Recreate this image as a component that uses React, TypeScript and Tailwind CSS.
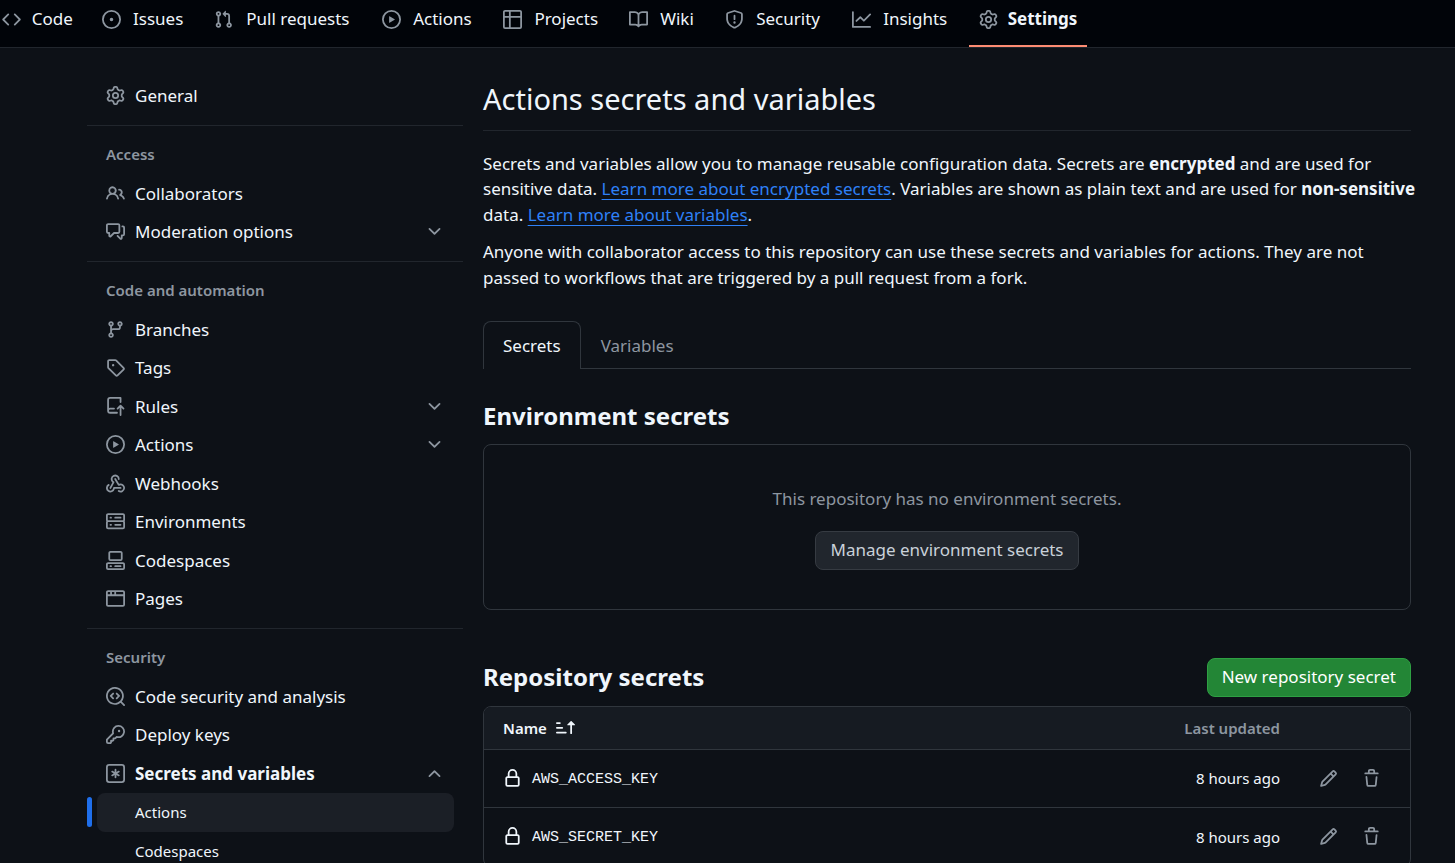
import React from "react";

const icons = {
  code: "m11.28 3.22 4.25 4.25a.75.75 0 0 1 0 1.06l-4.25 4.25a.749.749 0 0 1-1.275-.326.749.749 0 0 1 .215-.734L13.94 8l-3.72-3.72a.749.749 0 0 1 .326-1.275.749.749 0 0 1 .734.215Zm-6.56 0a.751.751 0 0 1 1.042.018.751.751 0 0 1 .018 1.042L2.06 8l3.72 3.72a.749.749 0 0 1-.326 1.275.749.749 0 0 1-.734-.215L.47 8.53a.75.75 0 0 1 0-1.06Z",
  issue: "M8 9.5a1.5 1.5 0 1 0 0-3 1.5 1.5 0 0 0 0 3Z M8 0a8 8 0 1 1 0 16A8 8 0 0 1 8 0ZM1.5 8a6.5 6.5 0 1 0 13 0 6.5 6.5 0 0 0-13 0Z",
  pull: "M1.5 3.25a2.25 2.25 0 1 1 3 2.122v5.256a2.251 2.251 0 1 1-1.5 0V5.372A2.25 2.25 0 0 1 1.5 3.25Zm5.677-.177L9.573.677A.25.25 0 0 1 10 .854V2.5h1A2.5 2.5 0 0 1 13.5 5v5.628a2.251 2.251 0 1 1-1.5 0V5a1 1 0 0 0-1-1h-1v1.646a.25.25 0 0 1-.427.177L7.177 3.427a.25.25 0 0 1 0-.354ZM3.75 2.5a.75.75 0 1 0 0 1.5.75.75 0 0 0 0-1.5Zm0 9.5a.75.75 0 1 0 0 1.5.75.75 0 0 0 0-1.5Zm8.25.75a.75.75 0 1 0 1.5 0 .75.75 0 0 0-1.5 0Z",
  play: "M8 0a8 8 0 1 1 0 16A8 8 0 0 1 8 0ZM1.5 8a6.5 6.5 0 1 0 13 0 6.5 6.5 0 0 0-13 0Zm4.879-2.773 4.264 2.559a.25.25 0 0 1 0 .428l-4.264 2.559A.25.25 0 0 1 6 10.559V5.442a.25.25 0 0 1 .379-.215Z",
  table: "M0 1.75C0 .784.784 0 1.75 0h12.5C15.216 0 16 .784 16 1.75v12.5A1.75 1.75 0 0 1 14.25 16H1.75A1.75 1.75 0 0 1 0 14.25ZM6.5 6.5v8h7.75a.25.25 0 0 0 .25-.25V6.5Zm8-1.5V1.75a.25.25 0 0 0-.25-.25H6.5V5Zm-13 1.5v7.75c0 .138.112.25.25.25H5v-8ZM5 5V1.5H1.75a.25.25 0 0 0-.25.25V5Z",
  book: "M0 1.75A.75.75 0 0 1 .75 1h4.253c1.227 0 2.317.59 3 1.501A3.743 3.743 0 0 1 11.006 1h4.245a.75.75 0 0 1 .75.75v10.5a.75.75 0 0 1-.75.75h-4.507a2.25 2.25 0 0 0-1.591.659l-.622.621a.75.75 0 0 1-1.06 0l-.622-.621A2.25 2.25 0 0 0 5.258 13H.75a.75.75 0 0 1-.75-.75Zm7.251 10.324.004-5.073-.002-2.253A2.25 2.25 0 0 0 5.003 2.5H1.5v9h3.757a3.75 3.75 0 0 1 1.994.574ZM8.755 4.75l-.004 7.322a3.752 3.752 0 0 1 1.992-.572H14.5v-9h-3.495a2.25 2.25 0 0 0-2.25 2.25Z",
  shield: "M7.467.133a1.748 1.748 0 0 1 1.066 0l5.25 1.68A1.75 1.75 0 0 1 15 3.48V7c0 1.566-.32 3.182-1.303 4.682-.983 1.498-2.585 2.813-5.032 3.855a1.697 1.697 0 0 1-1.33 0c-2.447-1.042-4.049-2.357-5.032-3.855C1.32 10.182 1 8.566 1 7V3.48a1.75 1.75 0 0 1 1.217-1.667Zm.61 1.429a.25.25 0 0 0-.153 0l-5.25 1.68a.25.25 0 0 0-.174.238V7c0 1.358.275 2.666 1.057 3.86.784 1.194 2.121 2.34 4.366 3.297a.196.196 0 0 0 .154 0c2.245-.956 3.582-2.104 4.366-3.298C13.225 9.666 13.5 8.36 13.5 7V3.48a.251.251 0 0 0-.174-.237l-5.25-1.68ZM8.75 4.75v3a.75.75 0 0 1-1.5 0v-3a.75.75 0 0 1 1.5 0ZM9 10.5a1 1 0 1 1-2 0 1 1 0 0 1 2 0Z",
  graph: "M1.5 1.75V13.5h13.75a.75.75 0 0 1 0 1.5H.75a.75.75 0 0 1-.75-.75V1.75a.75.75 0 0 1 1.5 0Zm14.28 2.53-5.25 5.25a.75.75 0 0 1-1.06 0L7 7.06 4.28 9.78a.751.751 0 0 1-1.042-.018.751.751 0 0 1-.018-1.042l3.25-3.25a.75.75 0 0 1 1.06 0L10 7.94l4.72-4.72a.751.751 0 0 1 1.042.018.751.751 0 0 1 .018 1.042Z",
  gear: "M8 0a8.2 8.2 0 0 1 .701.031C9.444.095 9.99.645 10.16 1.29l.288 1.107c.018.066.079.158.212.224.231.114.454.243.668.386.123.082.233.09.299.071l1.103-.303c.644-.176 1.392.021 1.82.63.27.385.506.792.704 1.218.315.675.111 1.422-.364 1.891l-.814.806c-.049.048-.098.147-.088.294.016.257.016.515 0 .772-.01.147.038.246.088.294l.814.806c.475.469.679 1.216.364 1.891a7.977 7.977 0 0 1-.704 1.217c-.428.61-1.176.807-1.82.63l-1.102-.302c-.067-.019-.177-.011-.3.071a5.909 5.909 0 0 1-.668.386c-.133.066-.194.158-.211.224l-.29 1.106c-.168.646-.715 1.196-1.458 1.26a8.006 8.006 0 0 1-1.402 0c-.743-.064-1.289-.614-1.458-1.26l-.289-1.106c-.018-.066-.079-.158-.212-.224a5.738 5.738 0 0 1-.668-.386c-.123-.082-.233-.09-.299-.071l-1.103.303c-.644.176-1.392-.021-1.82-.63a8.12 8.12 0 0 1-.704-1.218c-.315-.675-.111-1.422.363-1.891l.815-.806c.05-.048.098-.147.088-.294a6.214 6.214 0 0 1 0-.772c.01-.147-.038-.246-.088-.294l-.815-.806C.635 6.045.431 5.298.746 4.623a7.92 7.92 0 0 1 .704-1.217c.428-.61 1.176-.807 1.82-.63l1.102.302c.067.019.177.011.3-.071.214-.143.437-.272.668-.386.133-.066.194-.158.211-.224l.29-1.106C6.009.645 6.556.095 7.299.03 7.53.01 7.764 0 8 0Zm-.571 1.525c-.036.003-.108.036-.137.146l-.289 1.105c-.147.561-.549.967-.998 1.189-.173.086-.34.183-.5.29-.417.278-.97.423-1.529.27l-1.103-.303c-.109-.03-.175.016-.195.045-.22.312-.412.644-.573.99-.014.031-.021.11.059.19l.815.806c.411.406.562.957.53 1.456a4.709 4.709 0 0 0 0 .582c.032.499-.119 1.05-.53 1.456l-.815.806c-.081.08-.073.159-.059.19.162.346.353.677.573.989.02.03.085.076.195.046l1.102-.303c.56-.153 1.113-.008 1.53.27.161.107.328.204.501.29.447.222.85.629.997 1.189l.289 1.105c.029.109.101.143.137.146a6.6 6.6 0 0 0 1.142 0c.036-.003.108-.036.137-.146l.289-1.105c.147-.561.549-.967.998-1.189.173-.086.34-.183.5-.29.417-.278.97-.423 1.529-.27l1.103.303c.109.029.175-.016.195-.045.22-.313.411-.644.573-.99.014-.031.021-.11-.059-.19l-.815-.806c-.411-.406-.562-.957-.53-1.456a4.709 4.709 0 0 0 0-.582c-.032-.499.119-1.05.53-1.456l.815-.806c.081-.08.073-.159.059-.19a6.464 6.464 0 0 0-.573-.989c-.02-.03-.085-.076-.195-.046l-1.102.303c-.56.153-1.113.008-1.53-.27a4.44 4.44 0 0 0-.501-.29c-.447-.222-.85-.629-.997-1.189l-.289-1.105c-.029-.11-.101-.143-.137-.146a6.6 6.6 0 0 0-1.142 0ZM11 8a3 3 0 1 1-6 0 3 3 0 0 1 6 0ZM9.5 8a1.5 1.5 0 1 0-3.001.001A1.5 1.5 0 0 0 9.5 8Z",
  people: "M2 5.5a3.5 3.5 0 1 1 5.898 2.549 5.508 5.508 0 0 1 3.034 4.084.75.75 0 1 1-1.482.235 4 4 0 0 0-7.9 0 .75.75 0 0 1-1.482-.236A5.507 5.507 0 0 1 3.102 8.05 3.493 3.493 0 0 1 2 5.5ZM11 4a3.001 3.001 0 0 1 2.22 5.018 5.01 5.01 0 0 1 2.56 3.012.749.749 0 0 1-.885.954.752.752 0 0 1-.549-.514 3.507 3.507 0 0 0-2.522-2.372.75.75 0 0 1-.574-.73v-.352a.75.75 0 0 1 .416-.672A1.5 1.5 0 0 0 11 5.5.75.75 0 0 1 11 4Zm-5.5-.5a2 2 0 1 0-.001 3.999A2 2 0 0 0 5.5 3.5Z",
  discussion: "M1.75 1h8.5c.966 0 1.75.784 1.75 1.75v5.5A1.75 1.75 0 0 1 10.25 10H7.061l-2.574 2.573A1.458 1.458 0 0 1 2 11.543V10h-.25A1.75 1.75 0 0 1 0 8.25v-5.5C0 1.784.784 1 1.75 1ZM1.5 2.75v5.5c0 .138.112.25.25.25h1a.75.75 0 0 1 .75.75v2.19l2.72-2.72a.749.749 0 0 1 .53-.22h3.5a.25.25 0 0 0 .25-.25v-5.5a.25.25 0 0 0-.25-.25h-8.5a.25.25 0 0 0-.25.25Zm13 2a.25.25 0 0 0-.25-.25h-.5a.75.75 0 0 1 0-1.5h.5c.966 0 1.75.784 1.75 1.75v5.5A1.75 1.75 0 0 1 14.25 12H14v1.543a1.458 1.458 0 0 1-2.487 1.03L9.22 12.28a.749.749 0 0 1 .326-1.275.749.749 0 0 1 .734.215l2.22 2.22v-2.19a.75.75 0 0 1 .75-.75h1a.25.25 0 0 0 .25-.25Z",
  branch: "M9.5 3.25a2.25 2.25 0 1 1 3 2.122V6A2.5 2.5 0 0 1 10 8.5H6a1 1 0 0 0-1 1v1.128a2.251 2.251 0 1 1-1.5 0V5.372a2.25 2.25 0 1 1 1.5 0v1.836A2.493 2.493 0 0 1 6 7h4a1 1 0 0 0 1-1v-.628A2.25 2.25 0 0 1 9.5 3.25Zm-6 0a.75.75 0 1 0 1.5 0 .75.75 0 0 0-1.5 0Zm8.25-.75a.75.75 0 1 0 0 1.5.75.75 0 0 0 0-1.5ZM4.25 12a.75.75 0 1 0 0 1.5.75.75 0 0 0 0-1.5Z",
  tag: "M1 7.775V2.75C1 1.784 1.784 1 2.75 1h5.025c.464 0 .91.184 1.238.513l6.25 6.25a1.75 1.75 0 0 1 0 2.474l-5.026 5.026a1.75 1.75 0 0 1-2.474 0l-6.25-6.25A1.752 1.752 0 0 1 1 7.775Zm1.5 0c0 .066.026.13.073.177l6.25 6.25a.25.25 0 0 0 .354 0l5.025-5.025a.25.25 0 0 0 0-.354l-6.25-6.25a.25.25 0 0 0-.177-.073H2.75a.25.25 0 0 0-.25.25ZM6 5a1 1 0 1 1 0 2 1 1 0 0 1 0-2Z",
  rules: "M1 2.5A2.5 2.5 0 0 1 3.5 0h8.75a.75.75 0 0 1 .75.75v3.5a.75.75 0 0 1-1.5 0V1.5h-8a1 1 0 0 0-1 1v6.708A2.493 2.493 0 0 1 3.5 9h3.25a.75.75 0 0 1 0 1.5H3.5a1 1 0 0 0 0 2h5.75a.75.75 0 0 1 0 1.5H3.5A2.5 2.5 0 0 1 1 11.5Zm13.23 7.79h-.001l-1.224-1.224v6.184a.75.75 0 0 1-1.5 0V9.066L10.28 10.29a.75.75 0 0 1-1.06-1.061l2.505-2.504a.75.75 0 0 1 1.06 0L15.29 9.23a.751.751 0 0 1-.018 1.042.751.751 0 0 1-1.042.018Z",
  webhook: "M5.5 4.25a2.25 2.25 0 0 1 4.5 0 .75.75 0 0 0 1.5 0 3.75 3.75 0 1 0-6.14 2.889l-2.272 4.258a.75.75 0 0 0 1.324.706L7 7.25a.75.75 0 0 0-.309-1.015A2.25 2.25 0 0 1 5.5 4.25Z M7.364 3.607a.75.75 0 0 1 1.03.257l2.608 4.349a3.75 3.75 0 1 1-.628 6.785.75.75 0 0 1 .752-1.299 2.25 2.25 0 1 0-.033-3.88.75.75 0 0 1-1.03-.256L7.107 4.636a.75.75 0 0 1 .257-1.03Z M2.9 8.776A.75.75 0 0 1 2.625 9.8 2.25 2.25 0 1 0 6 11.75a.75.75 0 0 1 .75-.751h5.5a.75.75 0 0 1 0 1.5H7.425a3.751 3.751 0 1 1-5.55-3.998.75.75 0 0 1 1.024.274Z",
  server: "M1.75 1h12.5c.966 0 1.75.784 1.75 1.75v4c0 .372-.116.717-.314 1 .198.283.314.628.314 1v4a1.75 1.75 0 0 1-1.75 1.75H1.75A1.75 1.75 0 0 1 0 12.75v-4c0-.358.109-.707.314-1a1.739 1.739 0 0 1-.314-1v-4C0 1.784.784 1 1.75 1ZM1.5 2.75v4c0 .138.112.25.25.25h12.5a.25.25 0 0 0 .25-.25v-4a.25.25 0 0 0-.25-.25H1.75a.25.25 0 0 0-.25.25Zm.25 5.75a.25.25 0 0 0-.25.25v4c0 .138.112.25.25.25h12.5a.25.25 0 0 0 .25-.25v-4a.25.25 0 0 0-.25-.25ZM7 4.75A.75.75 0 0 1 7.75 4h4.5a.75.75 0 0 1 0 1.5h-4.5A.75.75 0 0 1 7 4.75ZM7.75 10h4.5a.75.75 0 0 1 0 1.5h-4.5a.75.75 0 0 1 0-1.5ZM3 4.75A.75.75 0 0 1 3.75 4h.5a.75.75 0 0 1 0 1.5h-.5A.75.75 0 0 1 3 4.75ZM3.75 10h.5a.75.75 0 0 1 0 1.5h-.5a.75.75 0 0 1 0-1.5Z",
  codespaces: "M0 11.25c0-.966.784-1.75 1.75-1.75h12.5c.966 0 1.75.784 1.75 1.75v3A1.75 1.75 0 0 1 14.25 16H1.75A1.75 1.75 0 0 1 0 14.25Zm2-9.5C2 .784 2.784 0 3.75 0h8.5C13.216 0 14 .784 14 1.75v5a1.75 1.75 0 0 1-1.75 1.75h-8.5A1.75 1.75 0 0 1 2 6.75Zm1.75-.25a.25.25 0 0 0-.25.25v5c0 .138.112.25.25.25h8.5a.25.25 0 0 0 .25-.25v-5a.25.25 0 0 0-.25-.25Zm-2 9.5a.25.25 0 0 0-.25.25v3c0 .138.112.25.25.25h12.5a.25.25 0 0 0 .25-.25v-3a.25.25 0 0 0-.25-.25Z M7 12.75a.75.75 0 0 1 .75-.75h4.5a.75.75 0 0 1 0 1.5h-4.5a.75.75 0 0 1-.75-.75Zm-4 0a.75.75 0 0 1 .75-.75h.5a.75.75 0 0 1 0 1.5h-.5a.75.75 0 0 1-.75-.75Z",
  browser: "M0 2.75C0 1.784.784 1 1.75 1h12.5c.966 0 1.75.784 1.75 1.75v10.5A1.75 1.75 0 0 1 14.25 15H1.75A1.75 1.75 0 0 1 0 13.25ZM14.5 6h-13v7.25c0 .138.112.25.25.25h12.5a.25.25 0 0 0 .25-.25Zm-6-3.5v2h6V2.75a.25.25 0 0 0-.25-.25ZM5 2.5v2h2v-2Zm-3.25 0a.25.25 0 0 0-.25.25V4.5h2v-2Z",
  codescan: "M8.47 4.97a.75.75 0 0 0 0 1.06L9.94 7.5 8.47 8.97a.75.75 0 1 0 1.06 1.06l2-2a.75.75 0 0 0 0-1.06l-2-2a.75.75 0 0 0-1.06 0ZM6.53 6.03a.75.75 0 0 0-1.06-1.06l-2 2a.75.75 0 0 0 0 1.06l2 2a.75.75 0 1 0 1.06-1.06L5.06 7.5l1.47-1.47Z M12.246 13.307a7.501 7.501 0 1 1 1.06-1.06l2.474 2.473a.749.749 0 0 1-.326 1.275.749.749 0 0 1-.734-.215ZM1.5 7.5a6.002 6.002 0 0 0 3.608 5.504 6.002 6.002 0 0 0 6.486-1.117.748.748 0 0 1 .292-.293A6 6 0 1 0 1.5 7.5Z",
  key: "M10.5 0a5.499 5.499 0 1 1-1.288 10.848l-.932.932a.749.749 0 0 1-.53.22H7v.75a.749.749 0 0 1-.22.53l-.5.5a.749.749 0 0 1-.53.22H5v.75a.749.749 0 0 1-.22.53l-.5.5a.749.749 0 0 1-.53.22h-2A1.75 1.75 0 0 1 0 14.25v-2c0-.199.079-.389.22-.53l4.932-4.932A5.5 5.5 0 0 1 10.5 0Zm-4 5.5c-.001.431.069.86.205 1.269a.75.75 0 0 1-.181.768L1.5 12.56v1.69c0 .138.112.25.25.25h1.69l.06-.06v-1.19a.75.75 0 0 1 .75-.75h1.19l.06-.06v-1.19a.75.75 0 0 1 .75-.75h1.19l1.023-1.025a.75.75 0 0 1 .768-.18A4 4 0 1 0 6.5 5.5ZM11 6a1 1 0 1 1 0-2 1 1 0 0 1 0 2Z",
  asterisk: "M0 2.75A2.75 2.75 0 0 1 2.75 0h10.5A2.75 2.75 0 0 1 16 2.75v10.5A2.75 2.75 0 0 1 13.25 16H2.75A2.75 2.75 0 0 1 0 13.25ZM2.75 1.5c-.69 0-1.25.56-1.25 1.25v10.5c0 .69.56 1.25 1.25 1.25h10.5c.69 0 1.25-.56 1.25-1.25V2.75c0-.69-.56-1.25-1.25-1.25Z M8 4a.75.75 0 0 1 .75.75V6.7l1.69-.975a.75.75 0 0 1 .75 1.3L9.5 8l1.69.976a.75.75 0 0 1-.75 1.298L8.75 9.3v1.951a.75.75 0 0 1-1.5 0V9.299l-1.69.976a.75.75 0 0 1-.75-1.3L6.5 8l-1.69-.975a.75.75 0 0 1 .75-1.3l1.69.976V4.75A.75.75 0 0 1 8 4Z",
  chevron: "M12.78 5.22a.749.749 0 0 1 0 1.06l-4.25 4.25a.749.749 0 0 1-1.06 0L3.22 6.28a.749.749 0 1 1 1.06-1.06L8 8.939l3.72-3.719a.749.749 0 0 1 1.06 0Z",
  pencil: "M11.013 1.427a1.75 1.75 0 0 1 2.474 0l1.086 1.086a1.75 1.75 0 0 1 0 2.474l-8.61 8.61c-.21.21-.47.364-.756.445l-3.251.93a.75.75 0 0 1-.927-.928l.929-3.25c.081-.286.235-.547.445-.758l8.61-8.61Zm.176 4.823L9.75 4.81l-6.286 6.287a.253.253 0 0 0-.064.108l-.558 1.953 1.953-.558a.253.253 0 0 0 .108-.064Zm1.238-3.763a.25.25 0 0 0-.354 0L10.811 3.75l1.439 1.44 1.263-1.263a.25.25 0 0 0 0-.354Z",
  trash: "M11 1.75V3h2.25a.75.75 0 0 1 0 1.5H2.75a.75.75 0 0 1 0-1.5H5V1.75C5 .784 5.784 0 6.75 0h2.5C10.216 0 11 .784 11 1.75ZM4.496 6.675l.66 6.6a.25.25 0 0 0 .249.225h5.19a.25.25 0 0 0 .249-.225l.66-6.6a.75.75 0 0 1 1.492.149l-.66 6.6A1.748 1.748 0 0 1 10.595 15h-5.19a1.75 1.75 0 0 1-1.741-1.575l-.66-6.6a.75.75 0 1 1 1.492-.15ZM6.5 1.75V3h3V1.75a.25.25 0 0 0-.25-.25h-2.5a.25.25 0 0 0-.25.25Z",
  lock: "M4 4a4 4 0 0 1 8 0v2h.25c.966 0 1.75.784 1.75 1.75v5.5A1.75 1.75 0 0 1 12.25 15h-8.5A1.75 1.75 0 0 1 2 13.25v-5.5C2 6.784 2.784 6 3.75 6H4Zm8.25 3.5h-8.5a.25.25 0 0 0-.25.25v5.5c0 .138.112.25.25.25h8.5a.25.25 0 0 0 .25-.25v-5.5a.25.25 0 0 0-.25-.25ZM10.5 6V4a2.5 2.5 0 1 0-5 0v2Z",
  sort: "m12.927 2.573 3 3A.25.25 0 0 1 15.75 6H13.5v6.75a.75.75 0 0 1-1.5 0V6H9.75a.25.25 0 0 1-.177-.427l3-3a.25.25 0 0 1 .354 0ZM0 12.25a.75.75 0 0 1 .75-.75h7.5a.75.75 0 0 1 0 1.5H.75a.75.75 0 0 1-.75-.75Zm0-4a.75.75 0 0 1 .75-.75h4.5a.75.75 0 0 1 0 1.5H.75A.75.75 0 0 1 0 8.25Zm0-4a.75.75 0 0 1 .75-.75h2.5a.75.75 0 0 1 0 1.5H.75A.75.75 0 0 1 0 4.25Z",
};

type IconName = keyof typeof icons;

function Icon({ name, className = "text-[#8d96a0]" }: { name: IconName; className?: string }) {
  return (
    <svg viewBox="0 0 16 16" fill="currentColor" aria-hidden="true" className={`size-[19px] shrink-0 ${className}`}>
      <path d={icons[name]} />
    </svg>
  );
}

const repoTabs: { label: string; icon: IconName; current?: boolean }[] = [
  { label: "Code", icon: "code" },
  { label: "Issues", icon: "issue" },
  { label: "Pull requests", icon: "pull" },
  { label: "Actions", icon: "play" },
  { label: "Projects", icon: "table" },
  { label: "Wiki", icon: "book" },
  { label: "Security", icon: "shield" },
  { label: "Insights", icon: "graph" },
  { label: "Settings", icon: "gear", current: true },
];

type Item = { label: string; icon: IconName; expandable?: boolean; children?: string[] };

const groups: { title?: string; items: Item[] }[] = [
  { items: [{ label: "General", icon: "gear" }] },
  {
    title: "Access",
    items: [
      { label: "Collaborators", icon: "people" },
      { label: "Moderation options", icon: "discussion", expandable: true },
    ],
  },
  {
    title: "Code and automation",
    items: [
      { label: "Branches", icon: "branch" },
      { label: "Tags", icon: "tag" },
      { label: "Rules", icon: "rules", expandable: true },
      { label: "Actions", icon: "play", expandable: true },
      { label: "Webhooks", icon: "webhook" },
      { label: "Environments", icon: "server" },
      { label: "Codespaces", icon: "codespaces" },
      { label: "Pages", icon: "browser" },
    ],
  },
  {
    title: "Security",
    items: [
      { label: "Code security and analysis", icon: "codescan" },
      { label: "Deploy keys", icon: "key" },
      { label: "Secrets and variables", icon: "asterisk", expandable: true, children: ["Actions", "Codespaces"] },
    ],
  },
];

const secrets = ["AWS_ACCESS_KEY", "AWS_SECRET_KEY"];

function RepoNav() {
  return (
    <header className="h-12 shrink-0 border-b border-[#21262d] bg-[#010409]">
      <nav aria-label="Repository" className="-ml-2 flex gap-[9px]">
        {repoTabs.map((tab) => (
          <a
            key={tab.label}
            href="#"
            aria-current={tab.current ? "page" : undefined}
            className={`flex h-[47px] items-start gap-[10px] border-b-2 px-[10px] pt-[6px] whitespace-nowrap ${
              tab.current ? "border-[#fd8c73] font-bold" : "border-transparent"
            }`}
          >
            <span className="flex h-[26px] items-center">
              <Icon name={tab.icon} />
            </span>
            {/* The hidden bold copy keeps a tab's width the same when it becomes current. */}
            <span
              data-label={tab.label}
              className="flex flex-col items-center after:invisible after:h-0 after:overflow-hidden after:font-bold after:content-[attr(data-label)]"
            >
              {tab.label}
            </span>
          </a>
        ))}
      </nav>
    </header>
  );
}

function SideItem({ item }: { item: Item }) {
  const open = Boolean(item.children);
  const row = `flex w-full items-center gap-[10px] px-[19px] pt-[6px] pb-[7px] text-left ${open ? "font-bold" : ""}`;
  const content = (
    <>
      <Icon name={item.icon} />
      <span className="grow">{item.label}</span>
      {item.expandable && <Icon name="chevron" className={open ? "rotate-180 text-[#8d96a0]" : "text-[#8d96a0]"} />}
    </>
  );
  return (
    <li>
      {item.expandable ? (
        <button type="button" aria-expanded={open} className={row}>
          {content}
        </button>
      ) : (
        <a href="#" className={row}>
          {content}
        </a>
      )}
      {item.children && (
        <ul className="text-[15px]">
          {item.children.map((child, i) => (
            <li key={child} className="flex items-center gap-[5px]">
              <span className={`h-[30px] w-[5px] rounded-md ${i === 0 ? "bg-[#1f6feb]" : ""}`} />
              <a
                href="#"
                aria-current={i === 0 ? "page" : undefined}
                className={`mr-[9px] grow rounded-lg py-2 pl-[38px] ${i === 0 ? "bg-[#1b1f26]" : ""}`}
              >
                {child}
              </a>
            </li>
          ))}
        </ul>
      )}
    </li>
  );
}

function Sidebar() {
  return (
    <nav aria-label="Settings" className="w-[376px] shrink-0">
      {groups.map((group) => (
        <section key={group.title ?? "general"} className={group.title ? "mt-[9px] border-t border-[#21262d]" : ""}>
          {group.title && (
            <h3 className="flex h-[49px] items-center pt-2 pl-[19px] text-[15px] font-semibold text-[#8d96a0]">
              {group.title}
            </h3>
          )}
          <ul>
            {group.items.map((item) => (
              <SideItem key={item.label} item={item} />
            ))}
          </ul>
        </section>
      ))}
    </nav>
  );
}

function TextLink({ children }: { children: React.ReactNode }) {
  return (
    <a href="#" className="text-[#2f81f7] underline underline-offset-4">
      {children}
    </a>
  );
}

function SecretsTable() {
  return (
    <div className="mt-[9px] overflow-hidden rounded-lg border border-[#30363d]">
      <table className="w-full border-collapse text-[15px]">
        <thead>
          <tr className="h-[43px] bg-[#161b22]">
            <th scope="col" aria-sort="ascending" className="pl-[19px] text-left font-semibold">
              <button type="button" className="flex items-center gap-[9px]">
                Name
                <Icon name="sort" className="text-[#f0f6fc]" />
              </button>
            </th>
            <th scope="col" className="text-right font-semibold text-[#8d96a0]">
              Last updated
            </th>
            <td className="w-[130px]" />
          </tr>
        </thead>
        <tbody>
          {secrets.map((name) => (
            <tr key={name} className="h-[58px] border-t border-[#30363d]">
              <td className="pl-[19px]">
                <div className="flex items-center gap-[10px]">
                  <Icon name="lock" className="text-[#f0f6fc]" />
                  <span>
                    <code className="font-['Liberation_Mono',monospace] text-[15px]">{name}</code>
                  </span>
                </div>
              </td>
              <td className="text-right">8 hours ago</td>
              <td>
                <div className="flex justify-end gap-1 pr-[19px]">
                  <button type="button" aria-label={`Edit ${name}`} className="grid size-[39px] place-items-center">
                    <Icon name="pencil" />
                  </button>
                  <button type="button" aria-label={`Delete ${name}`} className="grid size-[39px] place-items-center">
                    <Icon name="trash" />
                  </button>
                </div>
              </td>
            </tr>
          ))}
        </tbody>
      </table>
    </div>
  );
}

export default function App() {
  return (
    <div className="flex h-screen flex-col overflow-hidden bg-[#0d1117] font-['Noto_Sans',sans-serif] text-[17px] leading-normal text-[#f0f6fc]">
      <RepoNav />
      <div className="flex gap-5 pt-[29px] pr-11 pl-[87px]">
        <Sidebar />
        <main className="min-w-0 grow">
          <h1 className="border-b border-[#21262d] pb-[9px] text-[29px]">Actions secrets and variables</h1>
          <p className="mt-5 -mr-2">
            Secrets and variables allow you to manage reusable configuration data. Secrets are{" "}
            <strong className="font-bold">encrypted</strong> and are used for sensitive data.{" "}
            <TextLink>Learn more about encrypted secrets</TextLink>. Variables are shown as plain text and are used for{" "}
            <strong className="font-bold whitespace-nowrap">non-sensitive</strong> data.{" "}
            <TextLink>Learn more about variables</TextLink>.
          </p>
          <p className="mt-3 -mr-2">
            Anyone with collaborator access to this repository can use these secrets and variables for actions. They are
            not passed to workflows that are triggered by a pull request from a fork.
          </p>

          <nav aria-label="Secrets and variables" className="mt-[31px] flex border-b border-[#30363d]">
            <a
              href="#"
              aria-current="page"
              className="-mb-px flex h-12 items-center rounded-t-lg border border-b-0 border-[#30363d] bg-[#0d1117] px-[19px]"
            >
              Secrets
            </a>
            <a
              href="#"
              className="-mb-px flex h-12 items-center border border-b-0 border-transparent px-[19px] text-[#8d96a0]"
            >
              Variables
            </a>
          </nav>

          <section>
            <h2 className="mt-[29px] text-2xl leading-9 font-bold">Environment secrets</h2>
            <div className="mt-[10px] flex flex-col items-center gap-[19px] rounded-lg border border-[#30363d] pt-[41px] pb-[39px]">
              <p className="text-[#8d96a0]">This repository has no environment secrets.</p>
              <button
                type="button"
                className="h-[39px] rounded-lg border border-[#363b42] bg-[#21262d] px-[14px] text-[#c9d1d9]"
              >
                Manage environment secrets
              </button>
            </div>
          </section>

          <section className="mt-12">
            <div className="flex items-center justify-between">
              <h2 className="text-2xl leading-9 font-bold">Repository secrets</h2>
              <button
                type="button"
                className="h-[39px] rounded-lg border border-[#2ea043] bg-[#238636] px-[14px] text-white"
              >
                New repository secret
              </button>
            </div>
            <SecretsTable />
          </section>
        </main>
      </div>
    </div>
  );
}
